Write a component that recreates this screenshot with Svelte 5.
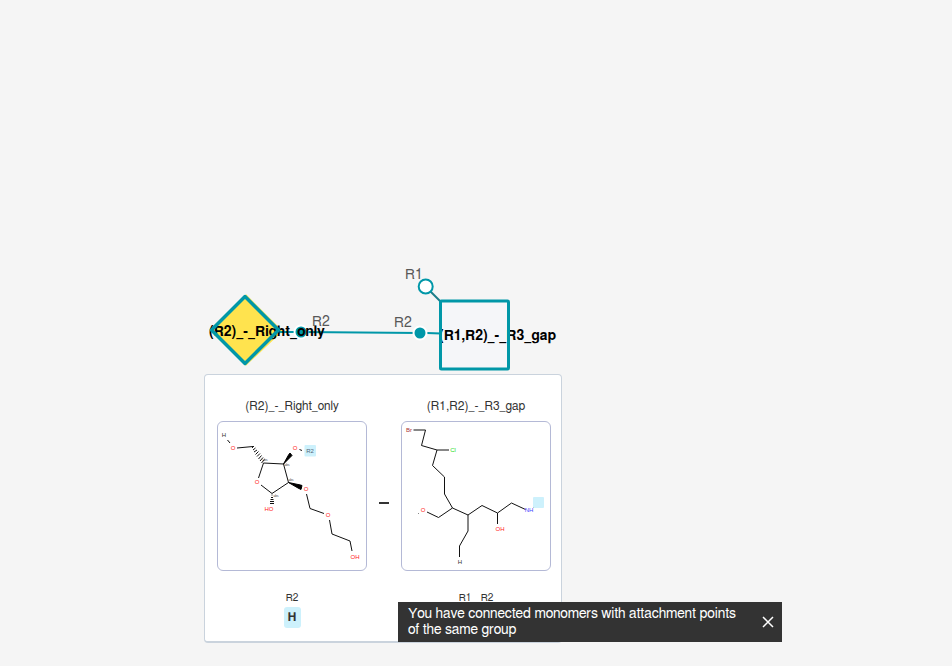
<script>
  let toastOpen = $state(true);

  const monomers = [
    { name: '(R2)_-_Right_only', points: [{ label: 'R2', group: 'H' }] },
    { name: '(R1,R2)_-_R3_gap', points: [{ label: 'R1', group: 'H' }, { label: 'R2', group: 'H' }] }
  ];
</script>

<main class="editor">
  <svg class="canvas" viewBox="0 0 952 666" aria-label="Monomer canvas">
    <path class="bond" d="M301 332 420 333" />
    <path class="halo" d="M246 297 280 331 246 363 212 330Z" />
    <path class="bond" d="M279 332H294" />
    <circle class="ring" cx="301" cy="332" r="6.500" />
    <text class="point" x="312" y="326">R2</text>
    <text class="name" x="209" y="336">(R2)_-_Right_only</text>
    <path class="diamond" d="M245 296.500 278.500 330 245 363.500 211.500 330Z" />

    <path class="bond dark" d="M430.500 291.500 441 302" />
    <circle class="open" cx="425.700" cy="286.500" r="7" />
    <text class="point" x="405" y="279">R1</text>
    <path class="bond" d="M427 333 441 333.500" />
    <circle class="ring" cx="420" cy="333" r="6.500" />
    <text class="point" x="394" y="327">R2</text>
    <rect class="square-fill" x="440.500" y="301" width="68" height="68" rx="1" />
    <text class="name" x="439" y="340">(R1,R2)_-_R3_gap</text>
    <rect class="square" x="440.500" y="301" width="68" height="68" rx="1" />
  </svg>

  <section class="panel" aria-label="Connection preview">
    {#each monomers as monomer, i}
      {#if i > 0}<span class="link"></span>{/if}
      <article class="monomer">
        <h2>{monomer.name}</h2>
        <div class="structure">
          {#if i === 0}
            <svg viewBox="217 421 150 150" aria-hidden="true">
              <g class="lines">
                <path d="M227.500 440 230 443M237 448 253 446.500M258.500 478 263.500 463 283.500 464 288.500 482.500 272 493.500 261 485M299.500 449.500 302 450.500M306.500 494 310 508.500 324 513.500M329.500 520 332 534 350 541 352 551" />
                <path d="M252 448 254 446M253 450 255.500 448M254 452 257 450M255.500 454.500 258.500 451.500M257 456.500 260 453.500M258.500 459 261.500 455.500M260 461 263 457.500M261.500 463 264.500 459.500M271.500 495H272.500M271 497.500H273M270.500 499.500H273.500M270 501.500H274M270 503.500H274" />
              </g>
              <path class="wedge" d="M283.500 464 288.500 455 290 453 292 455.500 290.500 457ZM288.500 482.500 300.500 485 302 485.500 301 489.500 298 488Z" />
              <rect class="tag" x="304.500" y="445" width="11.500" height="11.500" rx="1" />
              <g class="atoms">
                <text x="224" y="437">H</text>
                <text class="grey" x="310" y="453">R2</text>
                <g class="red">
                  <text x="233" y="450">O</text>
                  <text x="295" y="450">O</text>
                  <text x="257" y="484">O</text>
                  <text x="306" y="491">O</text>
                  <text x="269" y="511">HO</text>
                  <text x="328" y="517">O</text>
                  <text x="355" y="559">OH</text>
                </g>
                <g class="stereo">
                  <text x="265" y="461">abs</text>
                  <text x="287" y="466">abs</text>
                  <text x="291" y="481">abs</text>
                  <text x="276" y="497">abs</text>
                </g>
              </g>
            </svg>
          {:else}
            <svg viewBox="401 421 150 150" aria-hidden="true">
              <g class="lines">
                <path d="M413.500 430H425.500L421.500 445.500 437 450H449M437 450 432.500 465.500 444.500 477V494L452.500 508 468 515 482 505.500 497.500 513 511.500 503 525.500 509.500M452.500 508 438.500 517.500 427 512M418.500 513.500 419 513M468 515V531L459.500 546V557M497.500 513V524M533.500 508 536 504.500" />
              </g>
              <rect class="tag" x="533" y="497" width="11" height="11" rx="1" />
              <g class="atoms">
                <text class="brown" x="409" y="432">Br</text>
                <text class="green" x="453" y="452">Cl</text>
                <text class="red" x="423" y="512">O</text>
                <text class="red" x="500" y="531">OH</text>
                <text class="blue" x="529" y="512">NH</text>
                <text x="460" y="564">H</text>
              </g>
            </svg>
          {/if}
        </div>
        <div class="points">
          {#each monomer.points as p}
            <div class="leaving"><span>{p.label}</span><b>{p.group}</b></div>
          {/each}
        </div>
      </article>
    {/each}
  </section>

  {#if toastOpen}
    <div class="toast" role="status">
      <p>You have connected monomers with attachment points of the same group</p>
      <button type="button" aria-label="Close" onclick={() => (toastOpen = false)}>
        <svg width="12" height="12" viewBox="0 0 12 12"><path d="M1 1 11 11M11 1 1 11" /></svg>
      </button>
    </div>
  {/if}
</main>

<style>
  :global(body) {
    margin: 0;
    background: #f5f5f5;
  }
  .editor {
    position: relative;
    min-height: 100vh;
    overflow: hidden;
    font-family: FreeSans, "Liberation Sans", Arial, sans-serif;
    color: #333;
  }
  .canvas { display: block; width: 952px; height: 666px; }
  .bond { fill: none; stroke: #0097a8; stroke-width: 2; }
  .dark { stroke: #1c7c88; }
  .halo { fill: #ffe34e; stroke: #ffe34e; stroke-width: 4; }
  .diamond { fill: none; stroke: #0097a8; stroke-width: 3.500; stroke-linejoin: round; }
  .ring { fill: #0097a8; stroke: #fff; stroke-width: 2; }
  .open { fill: #fff; stroke: #0097a8; stroke-width: 2; }
  .square-fill { fill: #f5f6f9; }
  .square { fill: none; stroke: #0097a8; stroke-width: 3; }
  .point { font-size: 14px; fill: #585858; }
  .name { font-size: 14px; font-weight: 700; fill: #000; }

  .panel {
    position: absolute;
    left: 204px;
    top: 374px;
    display: flex;
    padding: 24px 10px 13px 12px;
    border: 1px solid #cad3dd;
    border-bottom-width: 2px;
    border-radius: 4px;
    background: #fff;
  }
  .monomer { width: 150px; }
  h2 {
    margin: 0;
    font-size: 12px;
    line-height: 14px;
    font-weight: 400;
    text-align: center;
  }
  .structure {
    box-sizing: border-box;
    height: 150px;
    margin-top: 8px;
    border: 1px solid #b4b9d6;
    border-radius: 6px;
  }
  .structure svg { display: block; width: 150px; height: 150px; margin: -1px; }
  .link {
    width: 10px;
    height: 2px;
    margin: 103px 12px 0;
    background: #333;
  }
  .lines { fill: none; stroke: #111; stroke-width: 1; }
  .wedge { fill: #000; stroke: #000; stroke-width: 1; }
  .tag { fill: #cdf1fc; }
  .atoms { font-family: "Liberation Sans", Arial, sans-serif; font-size: 6px; text-anchor: middle; fill: #333; }
  .atoms .red { fill: #f22; }
  .atoms .grey { fill: #567; }
  .atoms .brown { fill: #a33; }
  .atoms .green { fill: #2d2; }
  .atoms .blue { fill: #44f; }
  .stereo { font-size: 3px; fill: #333; }
  .points {
    display: flex;
    justify-content: center;
    gap: 5px;
    margin-top: 20px;
  }
  .leaving {
    display: flex;
    flex-direction: column;
    align-items: center;
    gap: 2px;
    width: 17px;
    font-size: 10px;
    line-height: 14px;
  }
  .leaving b {
    width: 17px;
    border-radius: 3px;
    background: #cdf1fc;
    font-size: 12px;
    line-height: 21px;
    text-align: center;
  }

  .toast {
    position: absolute;
    left: 398px;
    bottom: 24px;
    box-sizing: border-box;
    display: flex;
    align-items: center;
    justify-content: space-between;
    width: 384px;
    padding: 4px 8px 4px 10px;
    background: #333;
    color: #fff;
  }
  .toast p {
    width: 340px;
    margin: 0;
    font-size: 14px;
    line-height: 16px;
  }
  .toast button {
    display: flex;
    padding: 0;
    border: 0;
    background: none;
  }
  .toast path { stroke: #fff; stroke-width: 1.500; }
</style>
